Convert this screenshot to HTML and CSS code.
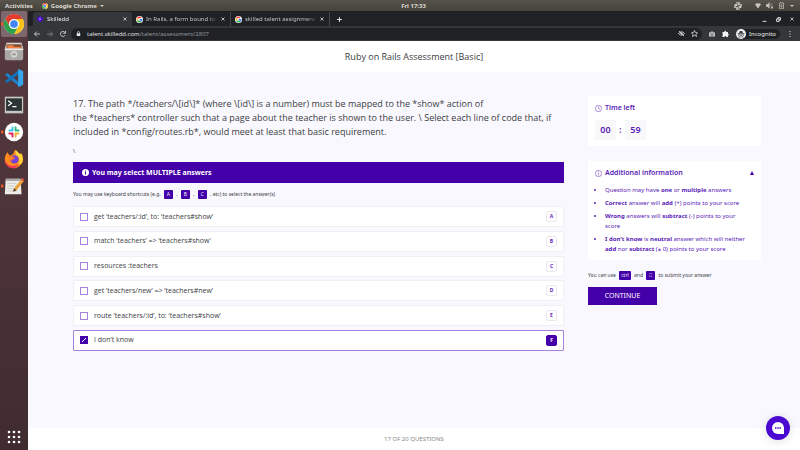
FILE: index.html
```html
<!DOCTYPE html>
<html lang="en">
<head>
<meta charset="utf-8">
<meta name="viewport" content="width=device-width, initial-scale=1">
<title>Skilledd</title>
<link rel="stylesheet" href="styles.css">
</head>
<body>
<svg class="defs" aria-hidden="true">
  <symbol id="chrome" viewBox="0 0 24 24">
    <circle cx="12" cy="12" r="12" fill="#fff"/>
    <path d="M1.6 6A12 12 0 0 1 22.4 6H12a6 6 0 0 0-5.2 9z" fill="#e33b2e"/>
    <path d="M22.4 6A12 12 0 0 1 12 24l5.2-9A6 6 0 0 0 17.2 9L12 6z" fill="#fcc31e"/>
    <path d="M12 24A12 12 0 0 1 1.6 6l5.2 9a6 6 0 0 0 10.4 0z" fill="#2da14c"/>
    <circle cx="12" cy="12" r="5.8" fill="#fff"/>
    <circle cx="12" cy="12" r="4.6" fill="#4285f4"/>
  </symbol>
  <symbol id="google" viewBox="0 0 24 24">
    <circle cx="12" cy="12" r="12" fill="#fff"/>
    <g fill="none" stroke-width="5">
      <path d="M17.500 6.500A7.500 7.500 0 0 0 5.400 8.600" stroke="#ea4335"/>
      <path d="M5.400 8.600a7.500 7.500 0 0 0 0 6.800" stroke="#fbbc05"/>
      <path d="M5.400 15.400A7.500 7.500 0 0 0 17 17.500" stroke="#34a853"/>
      <path d="M17 17.500A7.500 7.500 0 0 0 19.500 12.500H12" stroke="#4285f4"/>
    </g>
  </symbol>
  <symbol id="slack" viewBox="0 0 24 24">
    <g fill="none" stroke-width="4" stroke-linecap="round">
      <path d="M9.500 4v5.500M4 9.500h5.500" stroke="#36c5f0"/>
      <path d="M14.500 4v5.500M14.500 9.500H20" stroke="#2eb67d"/>
      <path d="M14.500 20v-5.500H20" stroke="#ecb22e"/>
      <path d="M9.500 20v-5.500H4" stroke="#e01e5a"/>
      <path d="M12 2v20M2 12h20" stroke="#fff" stroke-width="1.500"/>
    </g>
  </symbol>
</svg>

<header class="system-bar">
  <div class="system-left">
    <span>Activities</span>
    <span class="system-app"><svg class="icon-6"><use href="#chrome"/></svg>Google Chrome<i class="caret"></i></span>
  </div>
  <time>Fri 17:33</time>
  <div class="system-tray">
    <svg class="icon-8 tray-first" viewBox="0 0 24 24" fill="none" stroke="#f0eee8" stroke-width="4" stroke-linecap="round"><path d="M9 2v1M3 9h6M15 2v6M20 9h2M9 22v-6M2 15h2M15 22v-1M15 15h6"/></svg>
    <svg class="icon-6" viewBox="0 0 24 24" fill="#c9c6be"><path d="M0 5Q12-3 24 5L12 22z"/></svg>
    <svg class="icon-7" viewBox="0 0 24 24" fill="#c9c6be"><path d="M0 8h5l7-7v22l-7-7H0z"/><path d="M15 7q4 5 0 10M17 3q8 9 2 18" fill="none" stroke="#8f8c84" stroke-width="2.500"/><path d="M18 16h6v6h-6z"/></svg>
    <svg class="icon-7" viewBox="0 0 24 24" fill="none" stroke="#c9c6be" stroke-width="2.500"><path d="M5 4h4V1h6v3h4v19H5z"/><path d="M13 7l-4 7h6l-4 6"/></svg>
    <i class="caret"></i>
  </div>
</header>

<div class="desktop">
  <nav class="dock" aria-label="Dock">
    <button class="dock-item active running" aria-label="Google Chrome"><svg class="icon-20"><use href="#chrome"/></svg></button>
    <button class="dock-item" aria-label="Files"><svg class="icon-20" viewBox="0 0 24 24"><path d="M3 2h18l2 7H1z" fill="#dcd9d3"/><path d="M3 4h18v6H3z" fill="#7b4a32"/><path d="M4 5h7l1 2h8v4H4z" fill="#f08040"/><path d="M1 9h22v12a2 2 0 0 1-2 2H3a2 2 0 0 1-2-2z" fill="#aaa8a4"/><path d="M1 9h22v2H1z" fill="#eeece8"/><circle cx="12" cy="16" r="3.500" fill="#c6c4c0" stroke="#e4e2de"/><path d="M10 16h4" stroke="#777"/></svg></button>
    <button class="dock-item" aria-label="Visual Studio Code"><svg class="icon-20" viewBox="0 0 24 24"><path d="M1 8l3-2 14 11v5z" fill="#1b82cb"/><path d="M1 16l3 2L18 7V2z" fill="#1172b5"/><path d="M17 1l6 3v16l-6 3z" fill="#34a7ee"/></svg></button>
    <button class="dock-item" aria-label="Terminal"><svg class="icon-20" viewBox="0 0 24 24"><path d="M1 2h22v20H1z" fill="#c7c7c3"/><path d="M2.500 4h19v15h-19z" fill="#2d3436"/><path d="M5 7l4 3-4 3M10 14h5" fill="none" stroke="#fff" stroke-width="1.500"/></svg></button>
    <button class="dock-item running" aria-label="Slack"><svg class="icon-20" viewBox="0 0 24 24"><circle cx="12" cy="12" r="11" fill="#fff"/><use href="#slack" x="4" y="4" width="16" height="16"/></svg></button>
    <button class="dock-item" aria-label="Firefox"><svg class="icon-20" viewBox="0 0 24 24"><path d="M4 4l3 4 4-2 2-5 5 5 3-1q4 8 0 13-4 5-9 5-7 0-10-6Q-1 11 4 4z" fill="#ff8a1e"/><path d="M14 1l5 5 2 0q3 7 0 11l-4 2q3-6 0-10-4-2-3-8z" fill="#ffd53c"/><path d="M1 12q1 7 7 8 6 1 10-2-3 5-7 5-7 0-10-7z" fill="#f7315a"/><circle cx="12.500" cy="12.500" r="5" fill="#7440d8"/><path d="M5 9q6-1 9 2-4 0-4 3-3 0-5-5z" fill="#ff7b22"/></svg></button>
    <button class="dock-item running" aria-label="Text Editor"><svg class="icon-20" viewBox="0 0 24 24"><path d="M2 4h18l1 18H1z" fill="#ecebe6"/><path d="M2 3h18v3H2z" fill="#aaa"/><path d="M4 9h11M4 12h10M4 15h8M4 18h11" stroke="#ccc"/><path d="M21 4l3 2-9 11-4 2 1-4z" fill="#eba03c"/><path d="M22 2l2 2-1 2-3-2z" fill="#dc4b42"/><path d="M12 15l3 2-4 2z" fill="#3c3330"/></svg></button>
    <button class="dock-item dock-apps" aria-label="Show applications"><svg class="icon-14" viewBox="0 0 14 14" fill="#fff"><circle cx="2" cy="2" r="1.300"/><circle cx="7" cy="2" r="1.300"/><circle cx="12" cy="2" r="1.300"/><circle cx="2" cy="7" r="1.300"/><circle cx="7" cy="7" r="1.300"/><circle cx="12" cy="7" r="1.300"/><circle cx="2" cy="12" r="1.300"/><circle cx="7" cy="12" r="1.300"/><circle cx="12" cy="12" r="1.300"/></svg></button>
  </nav>

  <div class="browser">
    <div class="tab-strip">
      <div class="tab current"><svg class="icon-6" viewBox="0 0 24 24"><path d="M12 0l11 6v12l-11 6-11-6V6z" fill="#4b0bd0"/><path d="M16 8l-7 2 6 4-7 2" fill="none" stroke="#d8c8ff" stroke-width="2"/></svg><span>Skilledd</span><button class="plain" aria-label="Close tab"><svg class="icon-4" viewBox="0 0 8 8"><path d="M1 1l6 6M7 1L1 7"/></svg></button></div>
      <div class="tab"><svg class="icon-7"><use href="#google"/></svg><span>In Rails, a form bound to</span><button class="plain" aria-label="Close tab"><svg class="icon-4" viewBox="0 0 8 8"><path d="M1 1l6 6M7 1L1 7"/></svg></button></div>
      <div class="tab"><svg class="icon-7"><use href="#google"/></svg><span>skilled talent assignment</span><button class="plain" aria-label="Close tab"><svg class="icon-4" viewBox="0 0 8 8"><path d="M1 1l6 6M7 1L1 7"/></svg></button></div>
      <button class="plain new-tab" aria-label="New tab"><svg class="icon-5" viewBox="0 0 8 8"><path d="M4 0v8M0 4h8"/></svg></button>
      <div class="window-controls">
        <button class="plain" aria-label="Minimize"><svg class="icon-5" viewBox="0 0 8 8"><path d="M1 7h6"/></svg></button>
        <button class="plain" aria-label="Restore"><svg class="icon-5" viewBox="0 0 8 8"><path d="M1 3h4v4H1zM3 3V1h4v4H5"/></svg></button>
        <button class="plain" aria-label="Close"><svg class="icon-4" viewBox="0 0 8 8"><path d="M1 1l6 6M7 1L1 7"/></svg></button>
      </div>
    </div>
    <div class="toolbar">
      <button class="plain" aria-label="Back"><svg class="icon-6" viewBox="0 0 12 12"><path d="M12 6H1M6 1L1 6l5 5"/></svg></button>
      <button class="plain dim" aria-label="Forward"><svg class="icon-6" viewBox="0 0 12 12"><path d="M0 6h11M6 1l5 5-5 5"/></svg></button>
      <button class="plain" aria-label="Reload"><svg class="icon-6" viewBox="0 0 12 12"><path d="M10.500 8A5 5 0 1 1 10 3M11 0v4.500H6.500"/></svg></button>
      <div class="address">
        <svg class="icon-5" viewBox="0 0 10 10"><path d="M3 5V3a2 2 0 0 1 4 0v2"/><path d="M1.500 4.500h7V10h-7z" fill="#e8eaed" stroke="none"/></svg>
        <span class="url"><b>talent.skilledd.com</b>/talent/assessment/2807</span>
        <svg class="icon-7" viewBox="0 0 14 14"><path d="M1 7q6-7 12 0-6 7-12 0zM2 2l10 10"/><circle cx="7" cy="7" r="1.500"/></svg>
        <svg class="icon-7" viewBox="0 0 14 14"><path d="M7 1l2 4 4 .500-3 3 1 4.500-4-2.500L3 13l1-4.500-3-3L5 5z"/></svg>
      </div>
      <svg class="icon-6" viewBox="0 0 12 12"><path d="M0 3h3l1-2h4l1 2h3v8H0z" fill="#bdc1c6" stroke="none"/><circle cx="6" cy="7" r="2" stroke="#55575b"/></svg>
      <svg class="icon-7" viewBox="0 0 14 14"><path d="M1 4h4V3a1.700 1.700 0 0 1 3.400 0v1H12v3.500a1.700 1.700 0 0 1 0 3.400V14H8.500a1.800 1.800 0 0 0-3.600 0H1v-4a1.800 1.800 0 0 0 0-3z" fill="#f1f3f4" stroke="none"/></svg>
      <div class="profile"><svg class="icon-10" viewBox="0 0 20 20"><circle cx="10" cy="10" r="10" fill="#f1f3f4" stroke="none"/><path d="M6 8l1.500-4h5L14 8h3v1.500H3V8z" fill="#3c4043" stroke="none"/><circle cx="7" cy="12.500" r="2" stroke="#3c4043"/><circle cx="13" cy="12.500" r="2" stroke="#3c4043"/><path d="M5 17q5-3 10 0" stroke="#777"/></svg>Incognito</div>
      <button class="plain" aria-label="Menu"><svg class="icon-6" viewBox="0 0 12 12"><path d="M6 0v2M6 5v2M6 10v2" stroke-width="2"/></svg></button>
    </div>

    <div class="page">
      <header class="page-title"><h1>Ruby on Rails Assessment [Basic]</h1></header>
      <main class="content">
        <section class="question">
          <h2>17. The path */teachers/\[id\]* (where \[id\] is a number) must be mapped to the *show* action of<br>the *teachers* controller such that a page about the teacher is shown to the user. \ Select each line of code that, if<br>included in *config/routes.rb*, would meet at least that basic requirement.</h2>
          <p class="slash">\</p>
          <div class="notice"><svg class="icon-7" viewBox="0 0 14 14"><circle cx="7" cy="7" r="7" fill="#fff"/><path d="M7 3v2M7 6v5" stroke="#4400a8" stroke-width="2"/></svg>You may select MULTIPLE answers</div>
          <p class="hint">You may use keyboard shortcuts (e.g. <kbd>A</kbd> , <kbd>B</kbd> , <kbd>C</kbd> , etc) to select the answer(s)</p>
          <div class="options">
            <label class="option"><input type="checkbox"><span>get ‘teachers/:id’, to: ‘teachers#show’</span><kbd>A</kbd></label>
            <label class="option"><input type="checkbox"><span>match ‘teachers’ =&gt; ‘teachers#show’</span><kbd>B</kbd></label>
            <label class="option"><input type="checkbox"><span>resources :teachers</span><kbd>C</kbd></label>
            <label class="option"><input type="checkbox"><span>get ‘teachers/new’ =&gt; ‘teachers#new’</span><kbd>D</kbd></label>
            <label class="option"><input type="checkbox"><span>route ‘teachers/:id’, to: ‘teachers#show’</span><kbd>E</kbd></label>
            <label class="option"><input type="checkbox" checked><span>I don’t know</span><kbd>F</kbd></label>
          </div>
        </section>
        <aside class="side">
          <section class="card timer">
            <h3><svg class="icon-7" viewBox="0 0 14 14"><circle cx="7" cy="7" r="6.300"/><path d="M7 3v4l3 2"/></svg>Time left</h3>
            <div class="clock"><span>00</span><i>:</i><span>59</span></div>
          </section>
          <section class="card info">
            <h3><svg class="icon-7" viewBox="0 0 14 14"><circle cx="7" cy="7" r="6.300"/><path d="M7 3v2M7 6v5"/></svg>Additional information<button class="plain" aria-label="Collapse"><svg class="icon-4" viewBox="0 0 8 8"><path d="M4 0l4 8H0z" fill="#4400a8" stroke="none"/></svg></button></h3>
            <ul>
              <li>Question may have <b>one</b> or <b>multiple</b> answers</li>
              <li><b>Correct</b> answer will <b>add</b> (+) points to your score</li>
              <li><b>Wrong</b> answers will <b>subtract</b> (-) points to your score</li>
              <li><b>I don't know</b> is <b>neutral</b> answer which will neither <b>add</b> nor <b>subtract</b> (± 0) points to your score</li>
            </ul>
          </section>
          <p class="hint submit-hint">You can use <kbd>ctrl</kbd> and <kbd>⎕</kbd> to submit your answer</p>
          <button class="continue">CONTINUE</button>
        </aside>
      </main>
      <footer class="progress">17 OF 20 QUESTIONS</footer>
      <button class="chat" aria-label="Open chat"><svg class="icon-12" viewBox="0 0 24 24"><path d="M12 0a12 12 0 0 1 12 12v12H12a12 12 0 0 1 0-24z" fill="#fff"/><path d="M6 12h3M10.500 12h3M15 12h3" stroke="#4a08d0" stroke-width="3"/></svg></button>
    </div>
  </div>
</div>
</body>
</html>
```
FILE: styles.css
```css
* { box-sizing: border-box; }
body {
  margin: 0;
  min-height: 100vh;
  display: flex;
  flex-direction: column;
  font: 7px/10px "Noto Sans", "Open Sans", sans-serif;
  color: #3c4043;
}
h1, h2, h3, p, ul { margin: 0; }
button { font: inherit; cursor: pointer; }
svg { flex: none; display: block; }
.defs { position: absolute; width: 0; height: 0; }
.icon-4 { width: 4px; height: 4px; }
.icon-5 { width: 5px; height: 5px; }
.icon-6 { width: 6px; height: 6px; }
.icon-7 { width: 7px; height: 7px; }
.icon-8 { width: 8px; height: 8px; }
.icon-10 { width: 10px; height: 10px; }
.icon-12 { width: 12px; height: 12px; }
.icon-14 { width: 14px; height: 14px; }
.icon-20 { width: 20px; height: 20px; }
.plain { border: 0; padding: 0; background: none; display: flex; align-items: center; }

.system-bar {
  display: grid;
  grid-template-columns: 1fr auto 1fr;
  align-items: center;
  height: 11px;
  padding: 0 6px 0 5px;
  background: linear-gradient(#57534a, #45433c);
  color: #dfdbd2;
  font-size: 6px;
  font-weight: 700;
}
.system-bar time { margin-left: 28px; }
.system-left, .system-app, .system-tray { display: flex; align-items: center; }
.system-left { gap: 9px; }
.system-app { gap: 3px; }
.system-tray { justify-content: flex-end; gap: 5px; }
.tray-first { margin-right: 8px; }
.caret { border: 2px solid transparent; border-top-color: #d0ccc3; border-bottom: 0; }

.desktop { flex: 1; display: flex; }
.dock {
  flex: none;
  width: 28px;
  display: flex;
  flex-direction: column;
  align-items: center;
  gap: 1px;
  background: linear-gradient(#573a40, #402c2f);
}
.dock-item {
  display: flex;
  align-items: center;
  justify-content: center;
  width: 26px;
  height: 26px;
  padding: 0;
  border: 0;
  border-radius: 2px;
  background: none;
}
.active { background: #7d686d; }
.running { background-image: radial-gradient(circle at 1px 13px, #ef5a24 1px, transparent 2px); }
.dock-apps { margin-top: auto; }

.browser { flex: 1; min-width: 0; display: flex; flex-direction: column; }
.tab-strip button svg, .toolbar svg { fill: none; stroke: #e8eaed; stroke-width: 1.5; }
.tab-strip {
  display: flex;
  align-items: center;
  height: 15px;
  padding: 1px 6px 0 5px;
  background: #202124;
  font-size: 6px;
  color: #bdc1c6;
}
.tab {
  display: flex;
  align-items: center;
  gap: 3px;
  width: 99px;
  height: 14px;
  padding: 0 5px 0 4px;
  border-right: 1px solid #45474b;
}
.tab span {
  flex: 1;
  min-width: 0;
  white-space: nowrap;
  mask-image: linear-gradient(90deg, #000 85%, transparent);
}
.current { gap: 4px; background: #35363a; border: 0; border-radius: 3px 3px 0 0; color: #e8eaed; }
.new-tab { margin-left: 7px; }
.window-controls { display: flex; align-items: center; gap: 9px; margin-left: auto; }
.toolbar {
  display: flex;
  align-items: center;
  gap: 7px;
  height: 15px;
  padding: 0 7px 0 6px;
  background: #35363a;
  color: #e8eaed;
  font-size: 6px;
}
.dim { opacity: .5; }
.address {
  flex: 1;
  display: flex;
  align-items: center;
  gap: 6px;
  height: 12px;
  margin-left: -2px;
  padding: 0 4px 0 5px;
  border-radius: 6px;
  background: #202124;
}
.url { flex: 1; color: #9aa0a6; font-family: "Open Sans", sans-serif; }
.url b { color: #e8eaed; font-weight: 400; }
.profile {
  display: flex;
  align-items: center;
  gap: 3px;
  height: 10px;
  padding-right: 4px;
  border-radius: 5px;
  background: #202124;
}

.page {
  flex: 1;
  display: flex;
  flex-direction: column;
  background: #f9f8ff;
}
.page-title { padding: 9px 0 8px; background: #fff; text-align: center; }
.page-title h1 { font: 400 9px/14px "Open Sans", sans-serif; }
.content {
  flex: 1;
  display: grid;
  grid-template-columns: 491fr 173fr;
  gap: 24px;
  align-items: start;
  padding: 24px 39px 24px 45px;
}
.question h2 { padding-top: 1px; font: 500 9px/14px "Open Sans", sans-serif; }
.slash { margin-top: 7px; font-size: 6px; }
.notice {
  display: flex;
  align-items: center;
  gap: 3px;
  height: 21px;
  margin-top: 6px;
  padding: 0 9px;
  background: #4400a8;
  color: #fff;
  font-weight: 700;
}
.hint { font-size: 5px; line-height: 10px; white-space: nowrap; }
.question .hint { margin: 6px 0 7px; }
kbd {
  display: inline-block;
  min-width: 9px;
  padding: 0 2px;
  border-radius: 1px;
  background: #4400a8;
  color: #fff;
  font: 5px/9px "Open Sans", sans-serif;
  text-align: center;
}
.question .hint kbd { margin: 0 2px; }
.options { display: flex; flex-direction: column; justify-content: space-between; min-height: 145px; }
.option {
  display: flex;
  align-items: center;
  gap: 6px;
  height: 21px;
  padding: 0 6px;
  border: 1px solid #f0eff4;
  border-radius: 1px;
  background: #fff;
  font-family: "Open Sans", sans-serif;
}
.option span { flex: 1; }
.option input {
  appearance: none;
  width: 8px;
  height: 8px;
  margin: 0;
  border: 1px solid #a583dc;
  background: #fff;
}
.option input:checked {
  border-color: #4400a8;
  background: linear-gradient(135deg, transparent 42%, #fff 42% 58%, transparent 58%) center / 4px 4px no-repeat #4400a8;
}
.option kbd {
  width: 11px;
  border: 1px solid #ebe8f0;
  border-radius: 2px;
  background: #fff;
  color: #6128bd;
  font-weight: 700;
}
.option:has(:checked) { border-color: #a583dc; }
.option:has(:checked) kbd { border-color: #4400a8; background: #4400a8; color: #fff; }

.card { padding: 6px 7px; background: #fff; color: #5a22b8; }
.card h3 { display: flex; align-items: center; gap: 3px; font-size: 7px; line-height: 12px; font-weight: 600; }
.card h3 svg { fill: none; stroke: #5a22b8; stroke-width: 1; }
.card h3 button { margin-left: auto; }
.clock { display: flex; align-items: center; gap: 3px; margin-top: 6px; font-size: 9px; font-weight: 600; }
.clock span { width: 21px; line-height: 20px; background: #f8f8fa; text-align: center; }
.clock i { width: 3px; font-style: normal; }
.info { margin-top: 15px; }
.info ul { display: grid; gap: 3px; margin-top: 6px; padding: 0 6px 0 10px; font-size: 6px; line-height: 10px; }
.submit-hint { margin: 10px 0 7px; }
.submit-hint kbd { margin: 0 2px; }
.continue {
  width: 69px;
  height: 18px;
  padding: 0;
  border: 0;
  background: #4400a8;
  color: #fff;
}
.progress { padding: 6px 0; background: #fff; color: #888; font-size: 6px; text-align: center; }
.chat {
  position: fixed;
  right: 10px;
  bottom: 10px;
  display: grid;
  place-items: center;
  width: 24px;
  height: 24px;
  padding: 0;
  border: 0;
  border-radius: 50%;
  background: #4a08d0;
  box-shadow: 0 1px 10px #0002;
}
```
